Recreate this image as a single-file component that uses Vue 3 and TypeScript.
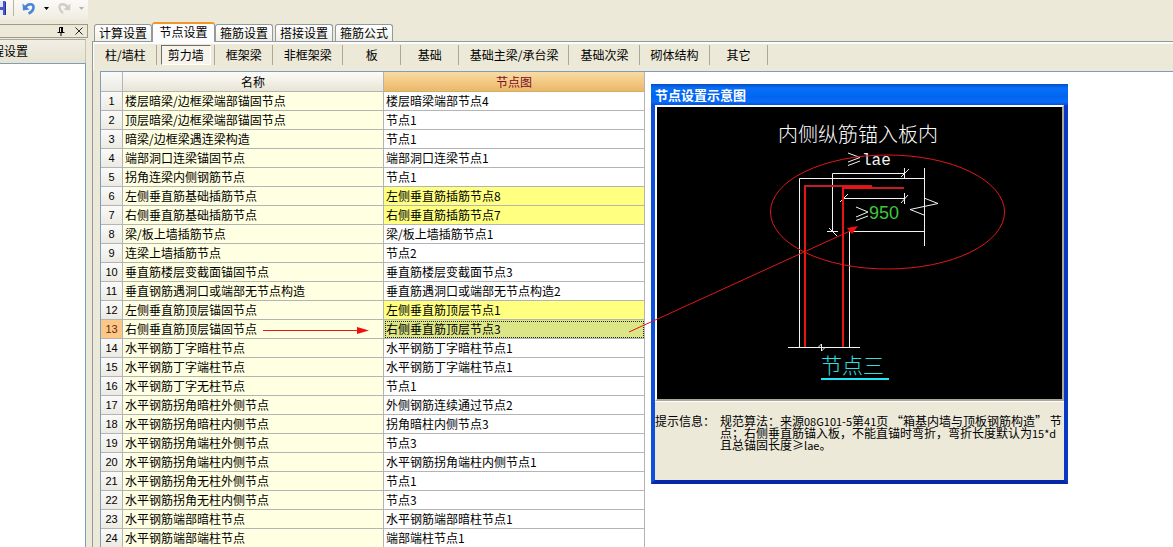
<script setup lang="ts">
import { ref } from 'vue'

interface NodeRow {
  name: string
  node: string
  changed?: boolean
}

const tabs: string[] = ['计算设置', '节点设置', '箍筋设置', '搭接设置', '箍筋公式']
const activeTab = ref(1)

const categories: string[] = [
  '柱/墙柱', '剪力墙', '框架梁', '非框架梁', '板', '基础',
  '基础主梁/承台梁', '基础次梁', '砌体结构', '其它',
]
const activeCategory = ref(1)

const rows: NodeRow[] = [
  { name: '楼层暗梁/边框梁端部锚固节点', node: '楼层暗梁端部节点4' },
  { name: '顶层暗梁/边框梁端部锚固节点', node: '节点1' },
  { name: '暗梁/边框梁遇连梁构造', node: '节点1' },
  { name: '端部洞口连梁锚固节点', node: '端部洞口连梁节点1' },
  { name: '拐角连梁内侧钢筋节点', node: '节点1' },
  { name: '左侧垂直筋基础插筋节点', node: '左侧垂直筋插筋节点8', changed: true },
  { name: '右侧垂直筋基础插筋节点', node: '右侧垂直筋插筋节点7', changed: true },
  { name: '梁/板上墙插筋节点', node: '梁/板上墙插筋节点1' },
  { name: '连梁上墙插筋节点', node: '节点2' },
  { name: '垂直筋楼层变截面锚固节点', node: '垂直筋楼层变截面节点3' },
  { name: '垂直钢筋遇洞口或端部无节点构造', node: '垂直筋遇洞口或端部无节点构造2' },
  { name: '左侧垂直筋顶层锚固节点', node: '左侧垂直筋顶层节点1', changed: true },
  { name: '右侧垂直筋顶层锚固节点', node: '右侧垂直筋顶层节点3', changed: true },
  { name: '水平钢筋丁字暗柱节点', node: '水平钢筋丁字暗柱节点1' },
  { name: '水平钢筋丁字端柱节点', node: '水平钢筋丁字端柱节点1' },
  { name: '水平钢筋丁字无柱节点', node: '节点1' },
  { name: '水平钢筋拐角暗柱外侧节点', node: '外侧钢筋连续通过节点2' },
  { name: '水平钢筋拐角暗柱内侧节点', node: '拐角暗柱内侧节点3' },
  { name: '水平钢筋拐角端柱外侧节点', node: '节点3' },
  { name: '水平钢筋拐角端柱内侧节点', node: '水平钢筋拐角端柱内侧节点1' },
  { name: '水平钢筋拐角无柱外侧节点', node: '节点1' },
  { name: '水平钢筋拐角无柱内侧节点', node: '节点3' },
  { name: '水平钢筋端部暗柱节点', node: '水平钢筋端部暗柱节点1' },
  { name: '水平钢筋端部端柱节点', node: '端部端柱节点1' },
]
const selectedRow = ref(12)
</script>

<template>
  <div class="app">
    <aside class="side">
      <div class="toolbar">
        <button class="tool save" aria-label="保存">
          <svg width="7" height="16" viewBox="0 0 7 16">
            <path d="M0 1H5L6 2V15H0Z" fill="#4a56c8" />
            <path d="M0 1H3V7H0Z" fill="#dfe6fa" />
            <path d="M0 10H3V15H0Z" fill="#e8ecf8" />
            <path d="M5.500 2V15" stroke="#26309a" />
          </svg>
        </button>
        <span class="tool-sep"></span>
        <button class="tool" aria-label="撤销">
          <svg width="14" height="14" viewBox="0 0 14 14">
            <path d="M3 7C6 1.500 12 2.500 11.500 6.500C11.200 9.500 9 11.500 6.500 12.500" fill="none" stroke="#4a84dc" stroke-width="2.600" />
            <path d="M0.500 2.500L1 9.500L7.500 8.500Z" fill="#4a84dc" />
          </svg>
        </button>
        <button class="tool" aria-label="撤销列表">
          <svg width="5" height="3" viewBox="0 0 5 3"><path d="M0 0H5L2.500 3Z" fill="#000" /></svg>
        </button>
        <button class="tool redo" aria-label="重做">
          <svg width="14" height="14" viewBox="0 0 14 14">
            <path d="M11 7C8 1.500 2 2.500 2.500 6.500C2.800 9.500 4 10.500 6 12" fill="none" stroke="#cfcdc4" stroke-width="2.400" />
            <path d="M13.500 2.500L13 9.500L6.500 8.500Z" fill="#cfcdc4" />
          </svg>
        </button>
        <button class="tool" aria-label="重做列表">
          <svg width="5" height="3" viewBox="0 0 5 3"><path d="M0 0H5L2.500 3Z" fill="#b5b2a6" /></svg>
        </button>
      </div>
      <div class="dock-title">
        <button class="tool" aria-label="自动隐藏">
          <svg width="8" height="9" viewBox="0 0 8 9">
            <path d="M2.500 5V0.500H5.500V5M0.500 5.500H7.500M4 6V9" fill="none" stroke="#000" />
            <path d="M5 0V5" stroke="#000" stroke-width="2" />
          </svg>
        </button>
        <button class="tool" aria-label="关闭">
          <svg width="8" height="8" viewBox="0 0 8 8"><path d="M0.500 0.500L7.500 7.500M7.500 0.500L0.500 7.500" stroke="#222" /></svg>
        </button>
      </div>
      <button class="dock-head"><span>工程设置</span></button>
      <div class="dock-body"></div>
    </aside>

    <main class="main">
      <div class="tabs" role="tablist">
        <button
          v-for="(tab, i) in tabs"
          :key="tab"
          role="tab"
          class="tab"
          :class="{ active: i === activeTab }"
          :aria-selected="i === activeTab"
          @click="activeTab = i"
        >{{ tab }}</button>
      </div>
      <section class="pane">
        <div class="categories">
          <div v-for="(item, i) in categories" :key="item" class="category">
            <button :class="{ pressed: i === activeCategory }" @click="activeCategory = i">{{ item }}</button>
          </div>
        </div>
        <div class="grid">
          <table>
            <thead>
              <tr>
                <th class="index"></th>
                <th class="col">名称</th>
                <th class="col current">节点图</th>
              </tr>
            </thead>
            <tbody>
              <tr
                v-for="(row, i) in rows"
                :key="i"
                :class="{ selected: i === selectedRow }"
                @click="selectedRow = i"
              >
                <th class="index" scope="row">{{ i + 1 }}</th>
                <td class="name">{{ row.name }}</td>
                <td class="node" :class="{ changed: row.changed }">{{ row.node }}</td>
              </tr>
            </tbody>
          </table>
        </div>
      </section>
    </main>

    <section class="dialog" role="dialog" aria-labelledby="dialog-title">
      <h2 id="dialog-title">节点设置示意图</h2>
      <div class="canvas">
        <svg viewBox="0 0 405 292">
          <g fill="none" stroke="#f2f2f2">
            <path d="M142.500 240V71.500H267M192.500 240V124.500H267" />
            <path d="M175.500 125V66.500H248M247.500 61V72M244 70L252 62" />
            <path d="M170 124.500H181M172 121L180 129" />
            <path d="M186 91.500H248M247.500 86V97M244 96L251 88M183 95L191 87" />
            <path d="M267.500 61V139M267 91L281 96.500L253 102.500L267 108" />
            <path d="M131 240.500H203M161 240.500L164.500 237V244L168 240.500" />
          </g>
          <g fill="none" stroke="#e81414">
            <path d="M148 240V79" stroke-width="2" />
            <path d="M186 240V81" stroke-width="2" />
            <path d="M147 79H215" stroke="#c41c20" stroke-width="2" />
            <path d="M185 81H247" stroke="#c41c20" stroke-width="2" />
            <path d="M185 80.500H215" stroke-width="3" />
          </g>
          <text class="cad" x="121" y="35" font-size="20" fill="#fff">内侧纵筋锚入板内</text>
          <text class="mono" x="205" y="58" font-size="16" fill="#f2f2f2">lae</text>
          <text class="digits" x="212" y="112" font-size="18" fill="#3cc83c">950</text>
          <g fill="none" stroke="#f2f2f2">
            <path d="M191 46L203 50.500L191 55M191 58.500L203 54" />
            <path d="M199 100L211 105L199 110M199 113.500L211 109" />
          </g>
          <text class="cad" x="164" y="266" font-size="21" fill="#2ce0e4">节点三</text>
          <path d="M164 272H232" stroke="#22e4f4" stroke-width="2" />
        </svg>
      </div>
      <dl class="note">
        <dt>提示信息：</dt>
        <dd>
          规范算法：来源<span class="latin">08G101-5</span>第<span class="latin">41</span>页 “箱基内墙与顶板钢筋构造” 节<br />
          点；右侧垂直筋锚入板，不能直锚时弯折，弯折长度默认为<span class="latin">15*d</span><br />
          且总锚固长度≥<span class="latin">lae</span>。
        </dd>
      </dl>
    </section>

    <svg class="annotations" aria-hidden="true">
      <g fill="none" stroke="#e01818">
        <path d="M263 330.500H360" />
        <path d="M629 332L850 231" />
        <ellipse cx="887.500" cy="212" rx="117" ry="57" />
      </g>
      <path d="M357 327L369 330.500L357 334Z" fill="#f01010" />
      <path d="M847 228L858 226L852 234Z" fill="#f01010" />
    </svg>
  </div>
</template>

<style>
body {
  margin: 0;
  background: #ece9d8;
}
</style>

<style scoped>
.app {
  position: relative;
  display: flex;
  min-height: 100vh;
  overflow: hidden;
  background: #ece9d8;
  color: #000;
  font: 12px/18px "Noto Sans CJK SC", sans-serif;
}

button {
  font: inherit;
  color: inherit;
  margin: 0;
  padding: 0;
  border: 0;
  background: none;
}

.side {
  flex: none;
  display: flex;
  flex-direction: column;
  width: 88px;
}

.toolbar {
  display: flex;
  align-items: center;
  box-sizing: border-box;
  height: 20px;
  padding-bottom: 4px;
  gap: 8px;
  background: linear-gradient(#fbfaf7, #efece0);
}

.tool {
  display: flex;
}

.tool.save {
  margin-right: -2px;
}

.tool-sep {
  width: 1px;
  height: 16px;
  background: #b8b5a6;
}

.dock-title {
  display: flex;
  align-items: center;
  justify-content: flex-end;
  box-sizing: border-box;
  height: 14px;
  margin-top: 4px;
  padding-right: 4px;
  gap: 10px;
  border: 1px solid #9c9a8e;
  border-left: 0;
}

.dock-head {
  display: flex;
  box-sizing: border-box;
  height: 24px;
  margin: 1px 2px 0 0;
  padding-bottom: 2px;
  border-top: 1px solid #aca899;
  border-right: 1px solid #c8c5b5;
  background: linear-gradient(#f1efe4, #e6e3d2);
  align-items: center;
}

.dock-head span {
  display: flex;
  justify-content: flex-end;
  width: 28px;
  white-space: nowrap;
}

.dock-body {
  flex: 1;
  margin-right: 2px;
  border-top: 1px solid #7f9db9;
  border-right: 1px solid #7f9db9;
  background: #fff;
}

.main {
  flex: 1;
  display: flex;
  flex-direction: column;
  min-width: 0;
  margin-left: 4px;
}

.tabs {
  display: flex;
  align-items: flex-end;
  height: 41px;
  padding-left: 2px;
}

.tab {
  box-sizing: border-box;
  width: 58px;
  height: 17px;
  margin-right: 2px;
  border: 1px solid #919b9c;
  border-bottom: 0;
  border-radius: 3px 3px 0 0;
  background: linear-gradient(#fff, #f0f0ea);
  line-height: 16px;
  white-space: nowrap;
}

.tab.active {
  position: relative;
  width: 63px;
  height: 20px;
  margin: 0 0 -1px -2px;
  padding-bottom: 2px;
  border-top: 2px solid #f0972c;
  background: #fcfcfe;
}

.pane {
  flex: 1;
  border-top: 1px solid #919b9c;
  border-left: 1px solid #919b9c;
}

.categories {
  display: flex;
  height: 27px;
  border-top: 2px solid #fcfcfe;
  border-left: 1px solid #fcfcfe;
}

.category {
  display: flex;
  align-items: center;
  justify-content: center;
  box-sizing: border-box;
  min-width: 58px;
  height: 20px;
  margin-top: 1px;
  padding: 0 3px 0 4px;
  border-right: 1px solid #aca899;
}

.category button {
  box-sizing: border-box;
  height: 20px;
  padding: 0 6px;
  border: 1px solid transparent;
  line-height: 18px;
  white-space: nowrap;
}

.category button.pressed {
  border-color: #716f64 #fff #fff #716f64;
  background: #f6f4ec;
}

.grid {
  margin-left: 7px;
  border-top: 1px solid #7f9db9;
  border-left: 1px solid #7f9db9;
  background: #fff;
}

table {
  border-collapse: separate;
  border-spacing: 0;
  table-layout: fixed;
  width: 544px;
}

th,
td {
  box-sizing: border-box;
  height: 19px;
  padding: 0;
  border-right: 1px solid #b4b4b4;
  border-bottom: 1px solid #b4b4b4;
  font-weight: 400;
  line-height: 18px;
  text-align: left;
  white-space: nowrap;
}

thead th {
  height: 20px;
  background: linear-gradient(#fcfbf8, #e8e5d6);
  text-align: center;
}

.index {
  width: 22px;
  background: linear-gradient(#fafafa, #ebeae2);
  font-family: "Liberation Sans", sans-serif;
  font-size: 11px;
  text-align: center;
}

.col {
  width: 261px;
}

.col.current {
  background: linear-gradient(#f8dca4, #ecb868);
  border-bottom-color: #cfae6c;
  color: #7a0a2a;
}

td {
  padding-left: 2px;
}

.name {
  background: #ffffe1;
}

.changed {
  background: #ffff80;
}

.selected .index {
  background: #fcc888;
  color: #6b2410;
}

.selected .node {
  background: #dde686;
  outline: 1px dotted #222;
  outline-offset: -2px;
}

.dialog {
  position: absolute;
  top: 84px;
  left: 651px;
  box-sizing: border-box;
  width: 417px;
  border: 4px solid;
  border-top-width: 0;
  border-color: #0a3ccc #0838c4 #0428a8 #0c50dc;
  background: #ece9d8;
}

.dialog h2 {
  margin: 0 -4px;
  padding-left: 4px;
  background: linear-gradient(#0a4cc8, #0870f8 20%, #0064f0 60%, #0a6cf8 85%, #0450d8);
  color: #fff;
  font-size: 13px;
  font-weight: 700;
  line-height: 21px;
}

.canvas {
  border: 2px solid #fff;
  border-right-color: #aca899;
  border-bottom-color: #aca899;
  background: #000;
}

.canvas svg {
  display: block;
  width: 100%;
}

.cad {
  font-family: "Noto Sans CJK SC", sans-serif;
  font-weight: 300;
}

.mono {
  font-family: "Liberation Mono", monospace;
}

.digits {
  font-family: "Liberation Sans", sans-serif;
}

.note {
  display: flex;
  box-sizing: border-box;
  min-height: 79px;
  margin: 0;
  padding-top: 13px;
  border-top: 1px solid #fff;
  line-height: 12px;
  white-space: nowrap;
}

.note dt {
  width: 65px;
}

.note dd {
  margin: 0;
}

.latin {
  font-size: 11px;
}

.annotations {
  position: absolute;
  inset: 0;
  width: 100%;
  height: 100%;
  pointer-events: none;
}
</style>
